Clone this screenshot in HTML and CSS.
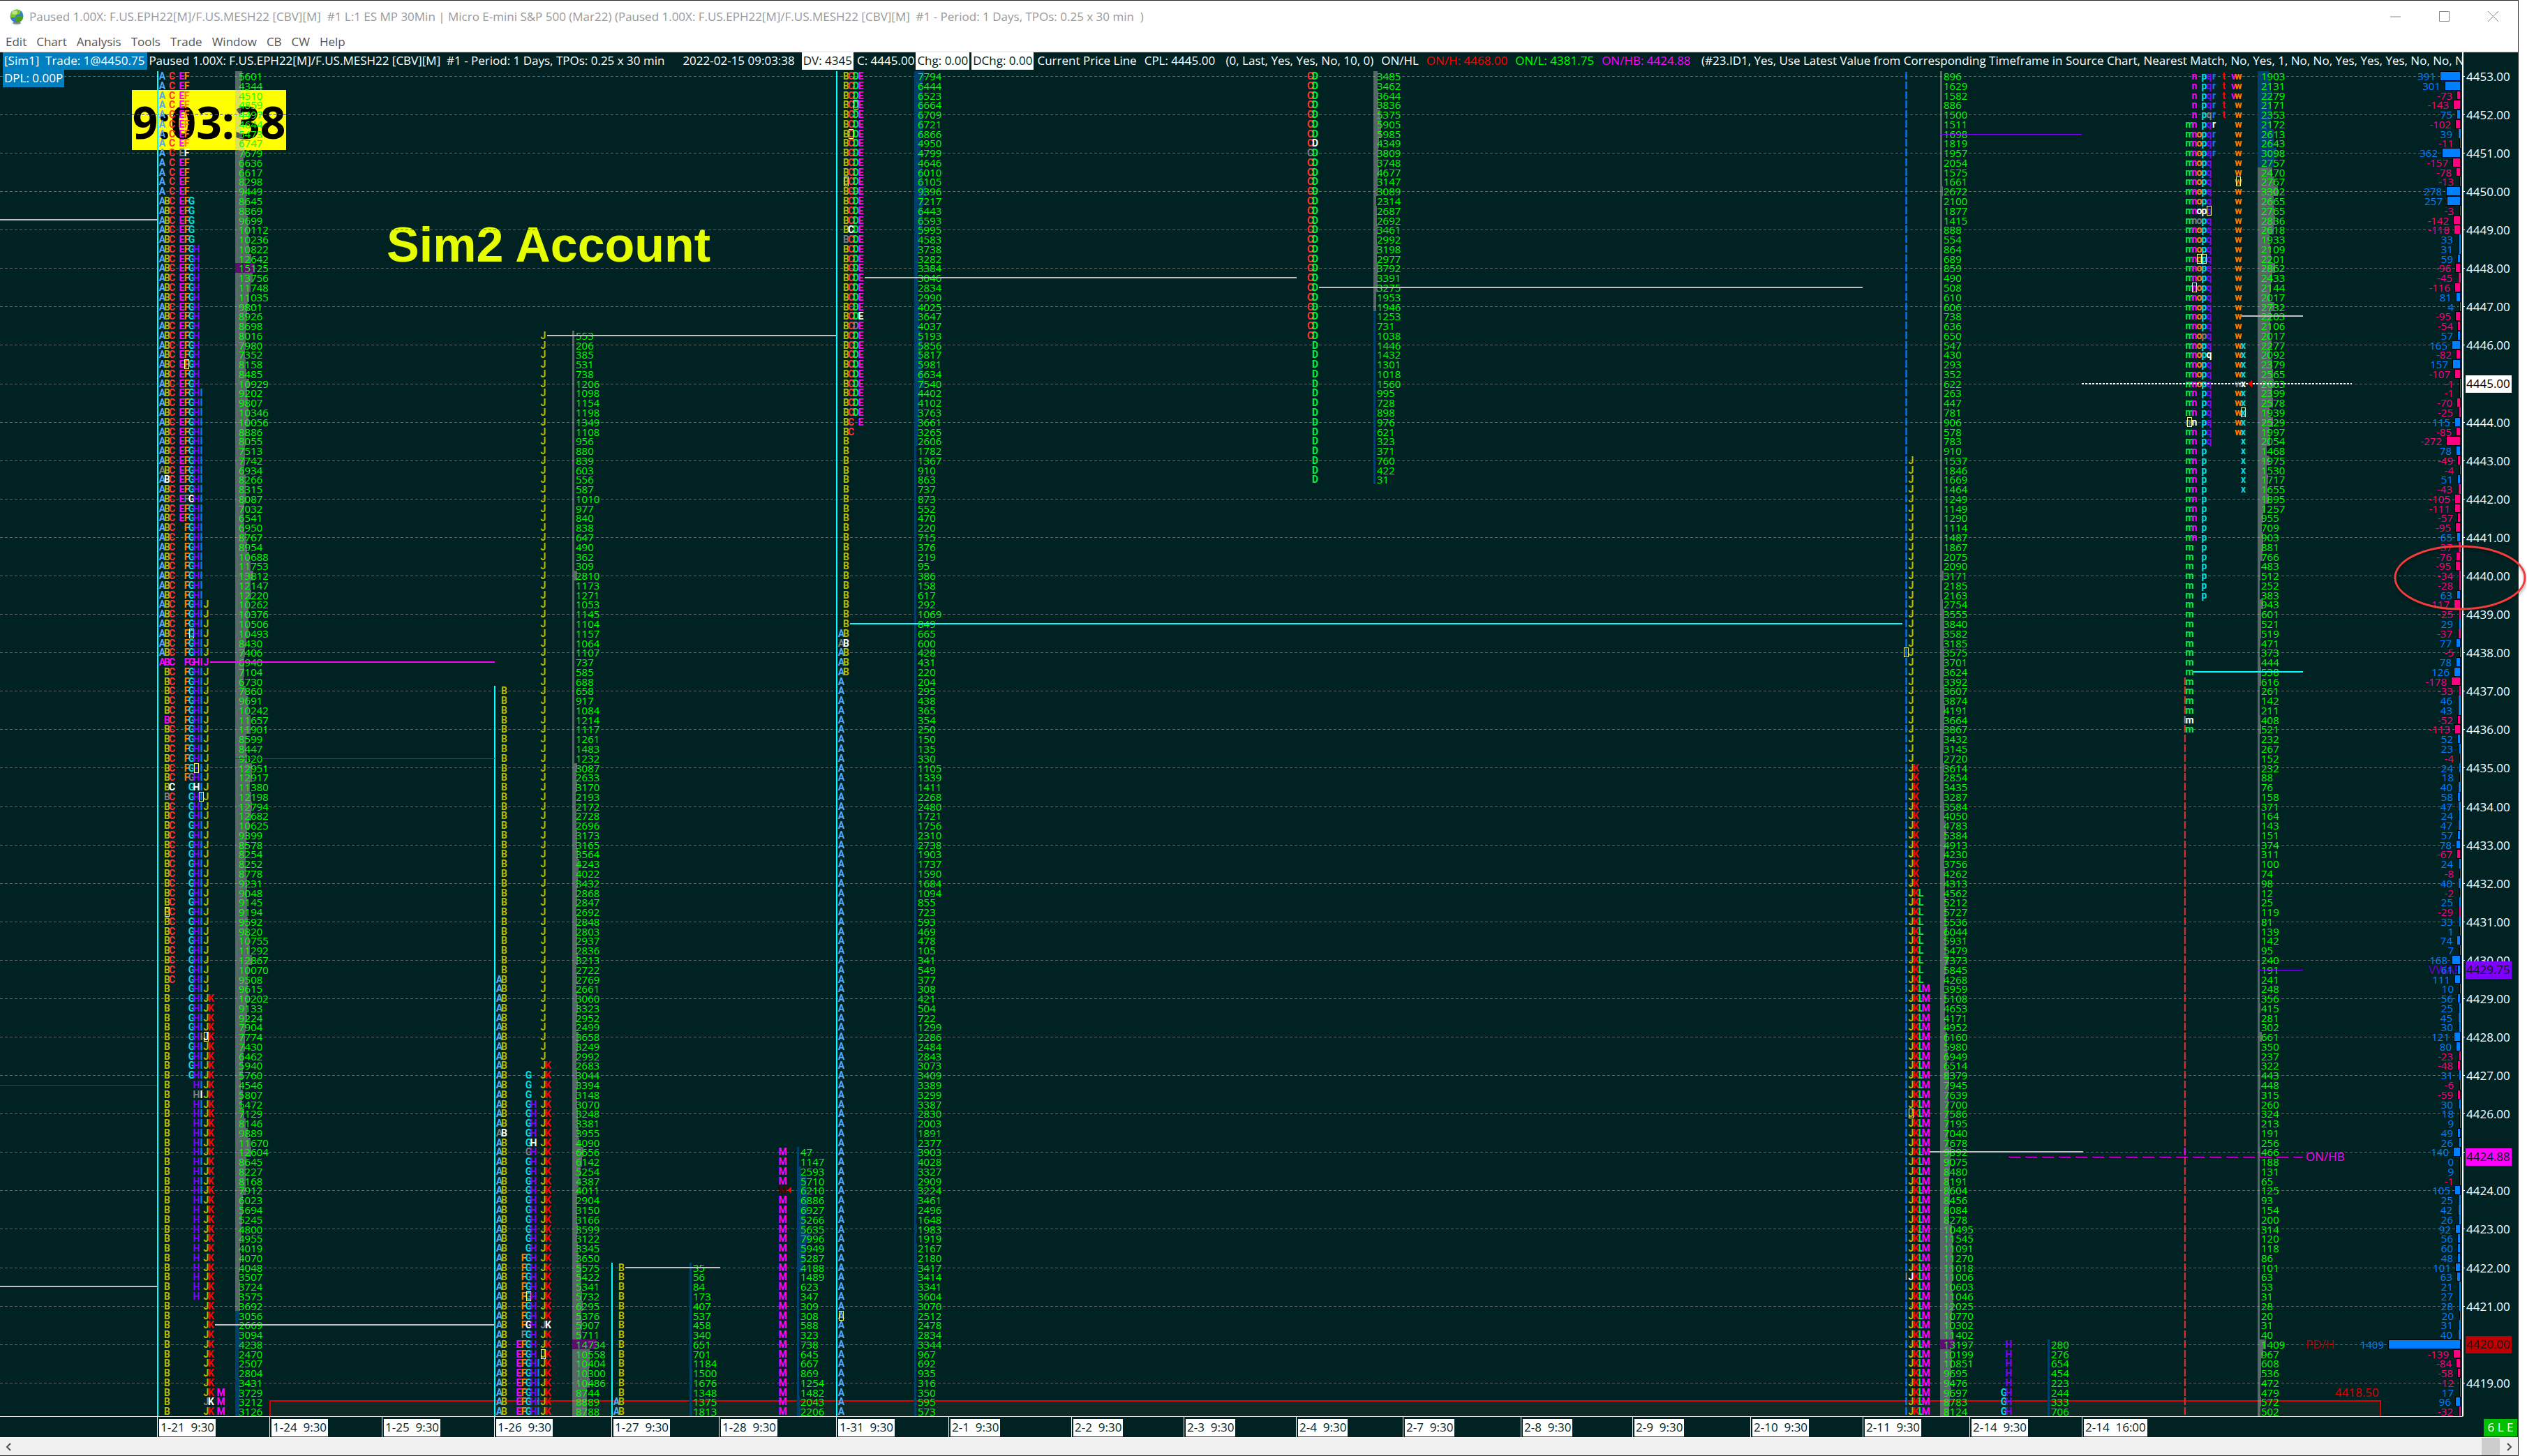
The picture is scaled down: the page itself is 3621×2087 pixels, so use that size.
FILE: index.html
```html
<!DOCTYPE html>
<html lang="en">
<head>
<meta charset="utf-8">
<title>Market profile chart</title>
<link rel="stylesheet" href="styles.css">
</head>
<body>
<div class="window">
  <header class="title-bar">
    <svg class="app-icon" viewBox="0 0 20 22" aria-hidden="true">
      <ellipse cx="10" cy="20" rx="6" ry="2" fill="#8a8a8a"/>
      <circle cx="10" cy="10" r="9.5" fill="#2f7fd0"/>
      <path d="M3 4C7 0 13 0 16 3l-2 4-4 1-3 4-5 0C0 9 1 6 3 4Z" fill="#7cc428"/>
      <path d="M9 11l6-2 4 2c0 4-3 8-8 8.500L8 15Z" fill="#4f9e1c"/>
      <ellipse cx="7" cy="5" rx="4" ry="3" fill="#e6f7c0" opacity=".6"/>
    </svg>
    <h1 class="title">Paused 1.00X: F.US.EPH22[M]/F.US.MESH22 [CBV][M]&nbsp; #1 L:1 ES MP 30Min | Micro E-mini S&amp;P 500 (Mar22) (Paused 1.00X: F.US.EPH22[M]/F.US.MESH22 [CBV][M]&nbsp; #1 - Period: 1 Days, TPOs: 0.25 x 30 min&nbsp; )</h1>
    <div class="window-controls">
      <button type="button" aria-label="Minimize"><svg viewBox="0 0 16 16"><path d="M0 8h15"/></svg></button>
      <button type="button" aria-label="Maximize"><svg viewBox="0 0 16 16"><path d="M.5.5h14v14H.500Z"/></svg></button>
      <button type="button" aria-label="Close"><svg viewBox="0 0 16 16"><path d="M0 0l15 15M15 0L0 15"/></svg></button>
    </div>
  </header>
  <nav class="menu">
    <button type="button">Edit</button>
    <button type="button">Chart</button>
    <button type="button">Analysis</button>
    <button type="button">Tools</button>
    <button type="button">Trade</button>
    <button type="button">Window</button>
    <button type="button">CB</button>
    <button type="button">CW</button>
    <button type="button">Help</button>
  </nav>
  <main class="chart">
    <section class="chart-body">
      <div class="status">
        <span class="trade">[Sim1]&nbsp; Trade: 1@4450.75</span>
        <span class="plain">Paused 1.00X: F.US.EPH22[M]/F.US.MESH22 [CBV][M]&nbsp; #1 - Period: 1 Days, TPOs: 0.25 x 30 min</span>
        <span class="stamp">2022-02-15 09:03:38</span>
        <span class="boxed">DV: 4345</span>
        <span class="plain">C: 4445.00</span>
        <span class="boxed">Chg: 0.00</span>
        <span class="boxed">DChg: 0.00</span>
        <span class="study">Current Price Line</span>
        <span class="study">CPL: 4445.00</span>
        <span class="study">&nbsp;(0, Last, Yes, Yes, No, 10, 0)</span>
        <span class="study">ON/HL</span>
        <span class="study high">ON/H: 4468.00</span>
        <span class="study low">ON/L: 4381.75</span>
        <span class="study half">ON/HB: 4424.88</span>
        <span class="study">&nbsp;(#23.ID1, Yes, Use Latest Value from Corresponding Timeframe in Source Chart, Nearest Match, No, Yes, 1, No, No, Yes, Yes, Yes, No, No, No, No)</span>
      </div>
      <div class="plot">
        <div class="layers" id="plot">
          <div class="clock">9:03:38</div>
          <div class="account">Sim2 Account</div>
          <div class="zone"></div>
        </div>
        <span class="dpl">DPL: 0.00P</span>
      </div>
    </section>
    <aside class="price-axis"><div class="layers" id="prices"></div></aside>
    <div class="time-axis" id="times"></div>
    <div class="corner"><span class="mode">6 L E</span></div>
  </main>
  <footer class="scrollbar">
    <button type="button" aria-label="Scroll left"><svg viewBox="0 0 12 12"><path d="M8 1L3 6l5 5"/></svg></button>
    <div class="track"><div class="thumb"></div></div>
    <button type="button" aria-label="Scroll right"><svg viewBox="0 0 12 12"><path d="M4 1l5 5-5 5"/></svg></button>
  </footer>
  <svg class="circle" viewBox="0 0 190 96" aria-hidden="true"><ellipse cx="95" cy="48" rx="93" ry="45"/></svg>
</div>
<script src="chart.js"></script>
</body>
</html>
```
FILE: styles.css
```css
* { box-sizing: border-box; }

html, body { height: 100%; margin: 0; background: #fff; }

body {
  font: 17px/24px "Open Sans", "Noto Sans", sans-serif;
  overflow: hidden;
}

button {
  border: 0;
  padding: 0;
  background: none;
  font: inherit;
  color: inherit;
}

svg { display: block; }

.window {
  position: relative;
  display: flex;
  flex-direction: column;
  height: 100%;
  margin-right: 12px;
  border-top: 1px solid #2b2b2b;
  border-right: 1px solid #2b2b2b;
  border-bottom: 1px solid #2b2b2b;
}

.title-bar {
  display: flex;
  align-items: center;
  gap: 8px;
  height: 46px;
  padding-left: 14px;
  color: #999;
}

.app-icon { width: 20px; height: 22px; }

.title { flex: 1; margin: 0; font-size: 17px; font-weight: 400; white-space: nowrap; }

.window-controls { display: flex; }
.window-controls button { width: 70px; height: 46px; display: grid; place-items: center; }
.window-controls svg { width: 16px; height: 16px; fill: none; stroke: #888; }

.menu {
  display: flex;
  gap: 14px;
  height: 28px;
  padding-left: 8px;
  border-bottom: 2px solid #f0f0f0;
  color: #555;
}

.chart {
  flex: 1;
  min-height: 0;
  display: grid;
  grid-template-columns: minmax(0, 1fr) 78px;
  grid-template-rows: minmax(0, 1fr) 30px;
  background: #002222;
  color: #fff;
}

.chart-body {
  display: flex;
  flex-direction: column;
  min-height: 0;
  border-right: 2px solid #fff;
  overflow: hidden;
}

.status {
  display: flex;
  height: 25px;
  padding-left: 4px;
  white-space: nowrap;
  overflow: hidden;
}
.status span { flex: none; height: 25px; padding: 0 2px; }
.status .boxed { background: #fff; color: #002222; margin-right: 3px; }
.status .study { padding: 0 9px 0 2px; }
.status .trade { padding-right: 4px; }
.status .stamp { padding: 0 10px 0 24px; }
.trade, .dpl { background: #0080c0; }
.high { color: #f00; }
.low { color: #0f0; }
.half { color: #f0f; }

.plot { position: relative; flex: 1; min-height: 0; padding-top: 2px; }
.layers { position: relative; height: 100%; }
.dpl { position: absolute; left: 4px; top: 0; height: 25px; padding: 0 2px; }

.clock {
  position: absolute;
  left: 189px;
  top: 27px;
  width: 221px;
  height: 86px;
  background: #ff0;
  color: #000;
  font: 700 64px/92px "Open Sans", sans-serif;
  text-align: center;
}

.account {
  position: absolute;
  left: 554px;
  top: 209px;
  color: #e6ff00;
  font: 700 70px/80px "Liberation Sans", sans-serif;
  white-space: nowrap;
}

.zone {
  position: absolute;
  left: 386px;
  bottom: 0;
  width: 3026px;
  height: 23px;
  border: 2px solid #e00000;
  border-bottom: 0;
  background: #0e2a26;
}

.mark { position: absolute; height: 2px; margin-top: -1px; }
.mark.grid {
  left: 0;
  right: 0;
  height: 1px;
  margin-top: 0;
  background: repeating-linear-gradient(90deg, #5c6669 0 4px, transparent 4px 7px);
}
.mark.white { background: #c0c0c0; }
.mark.magenta { background: #f0f; }
.mark.violet { height: 1px; margin-top: 0; background: #8000ff; }
.mark.cyan { background: #0ff; }
.mark.last { background: repeating-linear-gradient(90deg, #fff 0 3px, transparent 3px 5px); }
.mark.half-back { height: 1px; margin-top: 0; background: repeating-linear-gradient(90deg, #f0f 0 17px, transparent 17px 24px); }

.session { position: absolute; bottom: 0; width: 2px; background: #0ff; }

.rows {
  position: absolute;
  top: 0;
  bottom: 0;
  display: grid;
  grid-template-rows: repeat(140, minmax(0, 1fr));
}

.tpo { display: flex; font: 700 14px/15px Roboto, sans-serif; }
.tpo span { flex: none; width: 7px; height: 14px; display: flex; justify-content: center; }
.tpo .gray { color: #808080; }
.tpo .white { color: #fff; }
.tpo .pink { color: #f0f; }
.tpo .dark { color: #500000; }
.tpo .open { outline: 1px solid #ffff80; outline-offset: -1px; }

.cA { color: #50a8ff; } .cB, .cJ { color: #b8b800; } .cC { color: #ff3434; }
.cD, .cL, .cm { color: #00f040; } .cE, .cM, .cn, .cv { color: #f0f; }
.cF, .co, .cw { color: #ff8000; } .cG, .cp, .cx { color: #00dede; }
.cH, .cq { color: #8000ff; } .cI, .cr { color: #0080ff; }
.cK, .ct { color: #f00; } .cl { color: #e03030; }

.vol { display: flex; line-height: 14px; font-size: 15px; color: #0f0; }
.vol i { flex: none; height: 100%; }
.vol span { position: absolute; left: 5px; }
.vol .value { background: rgba(190, 190, 190, .45); }
.vol .outer { background: #00406c; }
.vol .poc { background: #5a106c; }

.deltas { right: 2px; }
.delta { display: flex; justify-content: flex-end; gap: 6px; font-size: 15px; line-height: 14px; }
.delta i { flex: none; min-width: 2px; border: 1px solid #000; }
.delta.up { color: #0080ff; }
.delta.down { color: #ff0080; }
.delta.up i { background: #0080ff; }
.delta.down i { background: #ff0080; }
.delta.small { gap: 8px; }
.delta.small i { border-width: 0 0 0 1px; }

.arrow {
  position: absolute;
  border: 5px solid transparent;
  border-left: 0;
  border-right: 6px solid #f00;
  margin-top: -5px;
}

.label { position: absolute; margin-top: -12px; }
.label.onhb { color: #f0f; }
.label.pdh { color: #b00000; }
.label.stop { color: #e00000; }
.label.vwap { color: #6a00d8; }

.price-axis { padding-top: 27px; position: relative; }
.price { position: absolute; left: 0; padding-left: 4px; margin-top: -11px; }
.price::before { content: ""; position: absolute; left: 0; top: 11px; width: 2px; height: 1px; background: #fff; }
.tag { position: absolute; left: 3px; width: 66px; height: 25px; margin-top: -12px; padding-left: 1px; color: #002222; }
.tag.last { background: #fff; color: #000; }
.tag.vwap { background: #8000ff; }
.tag.onhb { background: #f0f; }
.tag.pdh { background: #c00000; }

.time-axis {
  position: relative;
  border-top: 1px solid #fff;
  border-right: 2px solid #002222;
  white-space: pre;
}
.time { position: absolute; top: 0; height: 29px; padding: 3px 0 1px 2px; border-left: 1px solid #fff; }
.time span { display: block; height: 25px; padding: 0 2px; background: #fff; color: #002222; }

.corner { display: flex; justify-content: flex-end; padding: 4px 1px 1px; }
.mode { width: 48px; height: 25px; background: #00c000; text-align: center; }

.scrollbar { display: flex; height: 26px; border-top: 1px solid #fff; background: #f0f0f0; }
.scrollbar button { width: 26px; display: grid; place-items: center; }
.scrollbar svg { width: 12px; height: 12px; fill: none; stroke: #505050; stroke-width: 2; }
.track { flex: 1; display: flex; justify-content: flex-end; }
.thumb { width: 26px; background: #cdcdcd; }

.circle { position: absolute; right: -12px; top: 779px; width: 190px; height: 96px; }
.circle ellipse { fill: none; stroke: #f43c3c; stroke-width: 3; filter: drop-shadow(1px 2px 2px rgba(0, 0, 0, .4)); }
```
FILE: chart.js
```js
const ROWS = 140;
const nums = text => text.trim().split(/\s+/).map(Number);
const plot = document.getElementById('plot');
const topOf = row => `${(row + 0.5) / ROWS * 100}%`;

function add(parent, cls, text) {
  const el = document.createElement('div');
  el.className = cls;
  if (text !== undefined) el.textContent = text;
  parent.appendChild(el);
  return el;
}

// One entry per session: letters give the first and last row of each half hour,
// marks single out opening (b), first (w) and last (g) prints.
const profiles = [
  {
    x: 229, vol: 337, start: 0, scale: 0.00185, first: 'A', poc: 20, value: [0, 128],
    letters: { A: [0, 61], B: [13, 139], C: [0, 94], E: [0, 46], F: [0, 73], G: [13, 104], H: [18, 127], I: [33, 117], J: [55, 139], K: [96, 139], M: [137, 139] },
    marks: '8E:g 8F:w 30F:b 41A:g 42B:w 44F:g 44G:w 58G:b 61A:p 61B:p 61C:p 61F:p 61G:p 61H:p 61I:p 61J:p 67B:p 72H:b 73G:g 74C:w 74H:w 75B:g 75I:b 87B:b 100I:g 100J:wb 106H:g 106I:w 138J:g 138K:w',
    vols: nums(`5601 4344 4510 4859 4497 4644 5473 6747 7679 6636 6617 8298 9449 8645 8869 9699 10112 10236 10822 12642
      15125 13756 11748 11035 9801 8926 8698 8016 7980 7352 8158 8485 10929 9202 9807 10346 10056 8886 8055 7513
      7742 6934 8266 8315 8087 7032 6541 6950 8767 8954 10688 11753 13812 12147 12220 10262 10376 10506 10493 8430
      7406 6940 7104 6730 7860 9691 10242 11657 11901 8599 8447 9320 12951 12917 11380 12198 12794 12682 10625 9399
      8578 8254 8252 8778 9231 9048 9145 9194 9592 9820 10755 11292 12867 10070 9508 9615 10202 9133 9224 7904
      7774 7430 6462 5940 5760 4546 5807 5472 7129 8146 9889 11670 12604 8645 8227 8168 7912 6023 5694 5245
      4800 4955 4019 4070 4048 3507 3724 3575 3692 3056 2669 3094 4238 2470 2507 2804 3431 3729 3212 3126`)
  },
  {
    x: 712, vol: 820, start: 27, scale: 0.00236, first: 'A', poc: 132, value: [27, 139],
    letters: { A: [94, 139], B: [64, 139], E: [132, 139], F: [123, 139], G: [104, 139], H: [107, 139], I: [134, 139], J: [27, 139], K: [103, 139] },
    marks: '110A:g 110B:w 111H:w 112G:g 127G:b 130G:w 130J:g 130K:w 131F:g 133J:b',
    vols: nums(`553 206 385 531 738 1206 1098 1154 1198 1349 1108 956 880 839 603 556 587 1010 977 840 838 647 490 362 309
      2810 1173 1271 1053 1145 1104 1157 1064 1107 737 585 688 658 917 1084 1214 1117 1261
      1483 1232 3087 2633 3170 2193 2172 2728 2696 3173 3165 3564 4243 4022 3432 2868 2847 2692 2848 2803 2937 2836 3213
      2722 2769 2661 3060 3323 2952 2499 3658 3249 2992 2683 3044 3394 3148 3070 3248 3381 3955 4090 6656 6142 5254 4387
      4011 2904 3150 3166 3599 3122 3345 3650 5575 5422 5341 5732 6295 5376 5907 5711 14734 10558 10404 10300 10486 8744 8889 8788`)
  },
  {
    x: 880, vol: 988, start: 124, scale: 0.0024, first: 'A', value: [],
    letters: { A: [138, 139], B: [124, 139] }, marks: '',
    vols: nums('35 56 84 173 407 537 458 340 651 701 1184 1500 1676 1348 1375 1813')
  },
  {
    x: 1034, vol: 1142, start: 112, scale: 0.0022, first: 'A', value: [],
    letters: { M: [112, 139] }, marks: '116M:d',
    vols: nums('47 1147 2593 5710 6210 6886 6927 5266 5635 7996 5949 5287 4188 1489 623 347 309 308 588 323 738 645 667 869 1254 1482 2043 2206')
  },
  {
    x: 1202, vol: 1310, start: 0, scale: 0.0018, first: 'A', value: [],
    letters: { A: [58, 139], B: [0, 62], C: [0, 37], D: [0, 35], E: [0, 36] },
    marks: '3D:b 6C:b 11B:b 16C:w 17B:g 25E:w 26D:g 59A:g 59B:w 129A:b',
    vols: nums(`7794 6444 6523 6664 6709 6721 6866 4950 4799 4646 6010 6105 9396 7217 6443 6593 5995 4583 3738 3282
      3384 3046 2834 2990 4025 3647 4037 5193 5856 5817 5981 6634 7540 4402 4102 3763 3661 3265 2606 1782
      1367 910 863 737 873 552 470 220 715 376 219 95 386 158 617 292 1069 849 665 600 428 431 220 204 295 438 365 354 250 150
      135 330 1105 1339 1411 2268 2480 1721 1756 2310 2738 1903 1737 1590 1684 1094 855 723 593 469 478 105 341 549 377 308 421
      504 722 1299 2286 2484 2843 3073 3409 3389 3299 3387 2830 2003 1891 2377 3903 4028 3327 2909 3224 3461 2496 1648 1983 1919
      2167 2180 3417 3414 3341 3604 3070 2512 2478 2834 3344 967 692 935 316 350 595 573`)
  },
  {
    x: 1860, vol: 1968, start: 0, scale: 0.0018, first: 'A', value: [0, 24],
    letters: { C: [0, 27], D: [0, 42] }, marks: '7D:w 8C:g',
    vols: nums(`3485 3462 3644 3836 5375 5905 5985 4349 3809 3748 4677 3147 3089 2314 2687 2692 3461 2992 3198 2977 3792 3391 3275
      1953 1946 1253 731 1038 1446 1432 1301 1018 1560 995 728 898 976 621 323 371 760 422 31`)
  },
  {
    x: 2672, vol: 2780, start: 0, scale: 0.0016, first: 'A', poc: 132, value: [0, 139],
    letters: { I: [0, 139], J: [40, 139], K: [72, 139], L: [85, 139], M: [95, 139] },
    marks: '60I:b 108J:b 125I:g 125J:w',
    vols: nums(`896 1629 1582 886 1500 1511 1698 1819 1957 2054 1575 1661 2672 2100 1877 1415 888 554 864 689 859 490 508 610 606 738
      636 650 547 430 293 352 622 263 447 781 906 578 783 910 1537 1846 1669 1464 1249 1149 1290
      1114 1487 1867 2075 2090 3171 2185 2163 2754 3555 3840 3582 3185 3575 3701 3624 3392 3607 3874 4191 3664 3867 3432 3145 2720
      3614 2854 3435 3287 3584 4050 4783 5384 4913 4230 3756 4262 4313 4562 5212 5727 5536 6044 5931 5479 7373 5845
      4268 3959 5108 4653 4171 4952 6160 5980 6949 6514 8379 7945 7639 7700 7586 7195 7040 7678 9892 9075 8480 8191 8604 8456 8084
      8278 10495 11545 11091 11270 11018 11006 10603 11046 12025 10770 10302 11402 13197 10199 10851 9695 9476 9697 8783 8124`)
  },
  {
    x: 2826, vol: 2934, start: 132, scale: 0.0018, first: 'A', value: [],
    letters: { G: [137, 139], H: [132, 139] }, marks: '',
    vols: nums('280 276 654 454 223 244 333 706')
  },
  {
    x: 3127, vol: 3235, start: 0, scale: 0.0087, first: 'l', value: [10, 139],
    letters: { l: [63, 139], m: [5, 68], n: [0, 48], o: [6, 32], p: [0, 54], q: [0, 38], r: [0, 8], t: [0, 4], v: [0, 2], w: [0, 37], x: [28, 43] },
    marks: '4q:g 5r:w 11w:b 14o:w 14p:w 14q:b 15n:g 15o:g 19o:b 19p:b 22n:b 27p:g 29q:w 32w:g 32x:w 35x:b 36m:gb 36n:w 67l:g 67m:w 112l:p',
    vols: nums(`1903 2131 2279 2171 2353 2172 2613 2643 3098 2757 2470 2767 3302 2665 2765 2836 2618 1933 2109 2201 2862 2433 2144 2017
      2732 2203 2106 2017 2277 2092 2379 2565 2663 2399 2578 1939 2529 1997 2054 1468 1975 1530 1717 1655 1895 1257 955
      709 903 881 766 483 512 252 383 943 601 521 519 471 373 444 538 616 261 142 211 408 521 232 267 152 232 88 76 158 371 164 143
      151 374 311 100 74 98 12 25 119 81 139 142 95 240 191
      241 248 356 415 281 302 661 350 237 322 443 448 315 260 324 213 191 256 466 188 131 65 125 93 154 200 314 120 118 86 101
      63 53 31 28 20 31 40 1409 967 608 536 472 479 572 502`)
  }
];

const deltas = nums(`391 301 -73 -143 75 -102 39 -11 362 -157 -78 -13 278 257 -3 -142 -118 33 31 59 -96 -45 -116 81 4 -95 -54 57 165
  -82 157 -107 -1 -1 -70 -25 115 -85 -272 78 -49 -4 51 -43 -105 -111 -57
  -95 65 -37 -76 -95 -34 -28 63 -117 -25 29 -37 77 -5 78 126 -178 -33 46 43 -52 -113 52 23 -4 24 18 40 58 47 24 47 57 78 -67 24 -8
  40 -2 25 -29 33 1 74 7 168 61
  111 10 56 25 45 30 121 80 -23 -48 31 -6 -59 30 18 9 49 26 140 0 9 -1 105 25 42 26 92 56 60 48 101 63 21 27 28 20 31 40 1409
  -139 -84 -58 -12 17 96 -32`);

// row, left, right, style
const lines = [
  [15, 0, 225, 'white'], [105, 0, 225, 'violet'], [126, 0, 225, 'white'],
  [61, 301, 709, 'magenta'], [71, 337, 709, 'violet'], [130, 308, 709, 'white'],
  [27, 784, 1198, 'white'], [21, 1239, 1858, 'white'], [22, 1890, 2669, 'white'],
  [57, 1218, 2726, 'cyan'], [124, 896, 1032, 'white'], [6, 2780, 2983, 'violet'],
  [112, 2765, 2985, 'white'], [25, 3212, 3300, 'white'], [62, 3143, 3300, 'cyan'],
  [93, 3235, 3300, 'violet'], [32, 2983, 3370, 'last'], [112.5, 2878, 3300, 'half-back']
];

for (let row = 0; row < ROWS; row += 4) {
  add(plot, 'mark grid').style.top = topOf(row);
}

for (const [x, row] of [[225, 0], [708, 64], [876, 124], [1198, 0]]) {
  const el = add(plot, 'session');
  el.style.left = `${x}px`;
  el.style.top = `${row / ROWS * 100}%`;
}

const markNames = { g: 'gray', w: 'white', p: 'pink', d: 'dark', b: 'open' };

for (const p of profiles) {
  const marks = Object.fromEntries(p.marks.split(' ').filter(Boolean).map(m => m.split(':')));
  const last = Object.keys(p.letters).pop();
  const base = p.first.charCodeAt(0);

  const volume = add(plot, 'rows');
  volume.style.left = `${p.vol}px`;
  p.vols.forEach((v, i) => {
    const row = p.start + i;
    const cell = add(volume, 'vol');
    cell.style.gridRow = row + 1;
    const bar = document.createElement('i');
    bar.className = row === p.poc ? 'poc' : row >= p.value[0] && row <= p.value[1] ? 'value' : 'outer';
    bar.style.width = `${Math.max(3, Math.round(v * p.scale))}px`;
    const label = document.createElement('span');
    label.textContent = v;
    cell.append(bar, label);
  });

  const letters = add(plot, 'rows');
  letters.style.left = `${p.x}px`;
  for (let row = 0; row < ROWS; row++) {
    if (!Object.values(p.letters).some(([a, b]) => row >= a && row <= b)) continue;
    const cell = add(letters, 'tpo');
    cell.style.gridRow = row + 1;
    for (let code = base; code <= last.charCodeAt(0); code++) {
      const ch = String.fromCharCode(code);
      const range = p.letters[ch];
      const slot = document.createElement('span');
      if (range && row >= range[0] && row <= range[1]) {
        slot.textContent = ch;
        slot.className = [`c${ch}`, ...[...(marks[row + ch] || '')].map(m => markNames[m])].join(' ');
      }
      cell.appendChild(slot);
    }
  }
}

for (const [row, x1, x2, style] of lines) {
  const el = add(plot, `mark ${style}`);
  el.style.top = topOf(row);
  el.style.left = `${x1}px`;
  el.style.width = `${x2 - x1}px`;
}

for (const [row, x] of [[116, 1128], [32, 3221]]) {
  const el = add(plot, 'arrow');
  el.style.top = topOf(row);
  el.style.left = `${x}px`;
}

for (const [row, x, text, cls] of [[112.5, 3304, 'ON/HB', 'onhb'], [132, 3304, 'PD/H', 'pdh'], [137, 3346, '4418.50', 'stop'], [93, 3480, 'VWAP', 'vwap']]) {
  const el = add(plot, `label ${cls}`, text);
  el.style.top = topOf(row);
  el.style.left = `${x}px`;
}

const deltaRows = add(plot, 'rows deltas');
deltas.forEach((d, i) => {
  const width = Math.round(Math.abs(d) * 0.073);
  const cell = add(deltaRows, `delta ${d < 0 ? 'down' : 'up'}${width < 4 ? ' small' : ''}`);
  cell.style.gridRow = i + 1;
  const label = document.createElement('span');
  label.textContent = d;
  const bar = document.createElement('i');
  bar.style.width = `${width + 1}px`;
  cell.append(label, bar);
});

const prices = document.getElementById('prices');
for (let row = 0; row < ROWS; row += 4) {
  if (row === 32 || row === 132) continue;
  add(prices, 'price', (4453 - row / 4).toFixed(2)).style.top = topOf(row);
}
for (const [row, text, cls] of [[32, '4445.00', 'last'], [93, '4429.75', 'vwap'], [112.5, '4424.88', 'onhb'], [132, '4420.00', 'pdh']]) {
  add(prices, `tag ${cls}`, text).style.top = topOf(row);
}

const times = document.getElementById('times');
for (const [x, text] of [[225, '1-21  9:30'], [386, '1-24  9:30'], [547, '1-25  9:30'], [708, '1-26  9:30'], [876, '1-27  9:30'],
  [1030, '1-28  9:30'], [1198, '1-31  9:30'], [1359, '2-1  9:30'], [1535, '2-2  9:30'], [1696, '2-3  9:30'], [1857, '2-4  9:30'],
  [2010, '2-7  9:30'], [2179, '2-8  9:30'], [2339, '2-9  9:30'], [2508, '2-10  9:30'], [2669, '2-11  9:30'], [2822, '2-14  9:30'], [2983, '2-14  16:00']]) {
  const el = add(times, 'time');
  el.style.left = `${x}px`;
  const label = document.createElement('span');
  label.textContent = text;
  el.appendChild(label);
}
```
